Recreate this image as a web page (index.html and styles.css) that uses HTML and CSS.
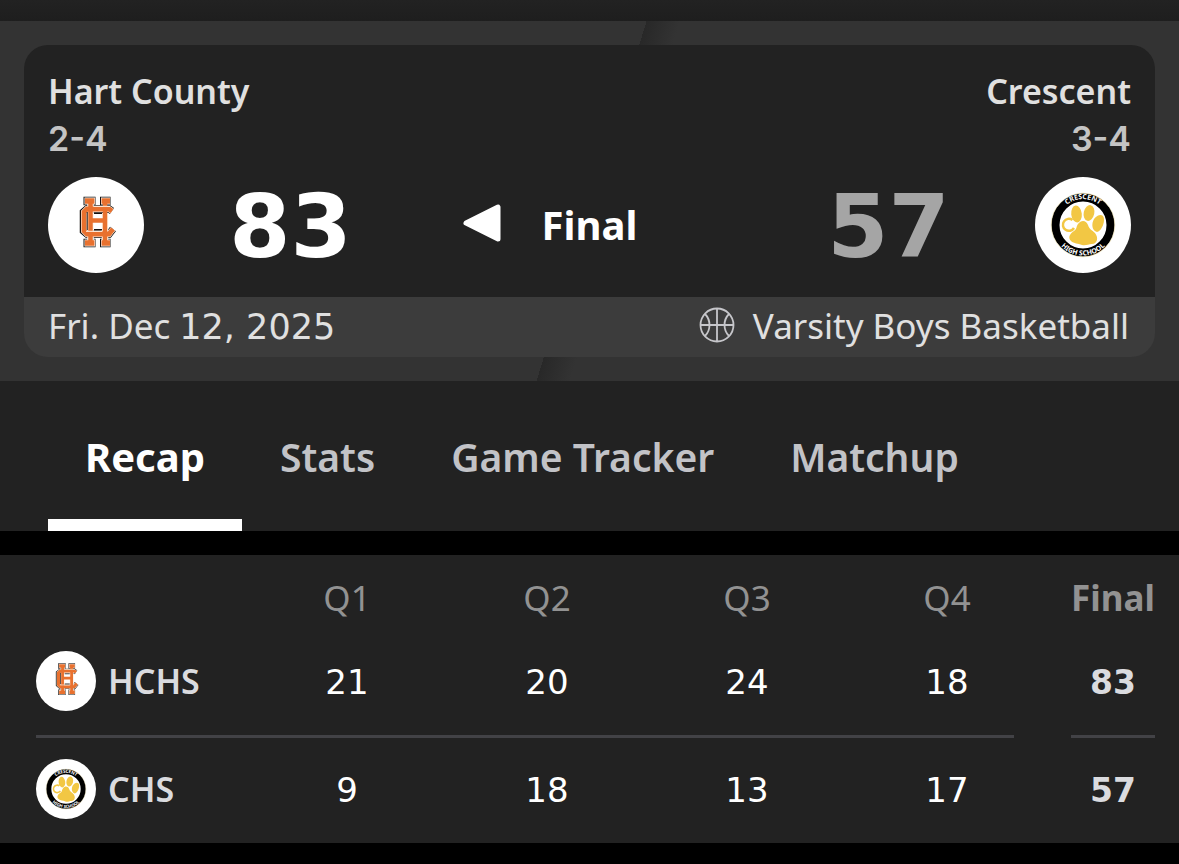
FILE: index.html
```html
<!DOCTYPE html>
<html lang="en">
<head>
  <meta charset="UTF-8">
  <title>Hart County vs Crescent</title>
  <meta name="viewport" content="width=device-width, initial-scale=1.0">
  <link rel="stylesheet" href="styles.css">
</head>
<body>
  <!-- Shared logos -->
  <svg class="sprite" aria-hidden="true">
    <defs>
      <symbol id="logo-hart" viewBox="0 0 96 96">
        <circle cx="48" cy="48" r="48" fill="#fff"/>
        <g fill="none">
          <!-- dark edge -->
          <path d="M35.500 24H47.500M52 24H62.500M35.500 66H47.500M52 66H62.500" stroke="#17120f" stroke-width="8.500"/>
          <path d="M64 34L61 32H39L35.500 35V54L39 57H61L65 52" stroke="#17120f" stroke-width="7.500"/>
          <!-- light edge -->
          <path d="M36.500 24H47M53 24H62M36.500 66H47M53 66H62" stroke="#fff" stroke-width="7"/>
          <path d="M64 34L61 32H39L36 35V54L39 57H61L65 52" stroke="#fff3e6" stroke-width="6"/>
          <path d="M42.500 24V66M57 36V66" stroke="#fff3e6" stroke-width="6.500"/>
          <!-- C and H -->
          <path d="M64 34L61 32H39L36 35V54L39 57H61L65 52" stroke="#e8712f" stroke-width="4.800"/>
          <path d="M39.200 35V53M46 36.500H54M46 52.500H54" stroke="#17120f" stroke-width="1"/>
          <path d="M37 24H46.500M53.500 24H62M37 66H46.500M53.500 66H62" stroke="#e8712f" stroke-width="5.500"/>
          <path d="M42.500 24V66M57 24V66M42 43.500H58" stroke="#e8712f" stroke-width="4.500"/>
          <path d="M45.500 29.300H62M38 54.300H54" stroke="#fff3e6" stroke-width="1"/>
        </g>
      </symbol>
      <symbol id="logo-crescent" viewBox="0 0 96 96">
        <circle cx="48" cy="48" r="48" fill="#fff"/>
        <circle cx="48" cy="48" r="27.500" fill="none" stroke="#000" stroke-width="8"/>
        <circle cx="48" cy="48" r="31.800" fill="none" stroke="#e8d99a" stroke-width="0.500"/>
        <g fill="#f2c744">
          <ellipse cx="41.500" cy="37" rx="5.300" ry="8.500" transform="rotate(-6 41.500 37)"/>
          <ellipse cx="54" cy="36" rx="5.300" ry="8" transform="rotate(12 54 36)"/>
          <path d="M68 39C71 43 67 54 62 55C57 54 56 47 59 42C62 38 66 37 68 39Z"/>
          <path d="M43 47C46 43 51 43 53 48C54 52 57 53 60 56C64 61 62 67 57 67C53 67 51 69 47 68C43 66 39 67 36 64C32 60 36 56 39 54C42 52 41 50 43 47Z"/>
        </g>
        <path d="M37.500 43A6 6 0 1 0 39 51" fill="none" stroke="#f2c744" stroke-width="2.500"/>
        <path id="arc-top" d="M22 48A26 26 0 0 1 74 48" fill="none"/>
        <path id="arc-bottom" d="M17.500 48A30.500 30.500 0 0 0 78.500 48" fill="none"/>
        <text class="logo-text"><textPath href="#arc-top" startOffset="50%">CRESCENT</textPath></text>
        <text class="logo-text"><textPath href="#arc-bottom" startOffset="50%">HIGH SCHOOL</textPath></text>
      </symbol>
    </defs>
  </svg>

  <div class="topbar"></div>

  <header class="hero">
    <div class="card">
      <div class="card-main">
        <div class="teams">
          <div class="team">
            <div class="team-name">Hart County</div>
            <div class="team-record">2-4</div>
          </div>
          <div class="team team-away">
            <div class="team-name">Crescent</div>
            <div class="team-record">3-4</div>
          </div>
        </div>
        <div class="score-row">
          <svg class="logo" role="img" aria-label="Hart County"><use href="#logo-hart"/></svg>
          <div class="score">83</div>
          <div class="status">
            <svg class="winner" viewBox="0 0 38 38" aria-hidden="true">
              <path d="M3 17L35 1V33Z" fill="#fff" stroke="#fff" stroke-width="5" stroke-linejoin="round"/>
            </svg>
            <span>Final</span>
          </div>
          <div class="score score-loser">57</div>
          <svg class="logo" role="img" aria-label="Crescent"><use href="#logo-crescent"/></svg>
        </div>
      </div>
      <div class="card-footer">
        <span>Fri. Dec <span class="num">12, 2025</span></span>
        <span class="sport">
          <svg class="ball" viewBox="0 0 36 36" aria-hidden="true">
            <g fill="none" stroke="#c6c6ca" stroke-width="1.800">
              <circle cx="18" cy="17" r="16.500"/>
              <path d="M18 0.500V33.500M1.500 17H34.500M6 6C12 12 12 22 6 28M30 6C24 12 24 22 30 28"/>
            </g>
          </svg>
          Varsity Boys Basketball
        </span>
      </div>
    </div>
  </header>

  <nav class="tabs">
    <a href="#recap" class="tab active">Recap</a>
    <a href="#stats" class="tab">Stats</a>
    <a href="#tracker" class="tab">Game Tracker</a>
    <a href="#matchup" class="tab">Matchup</a>
  </nav>

  <main class="box-score" id="recap">
    <table>
      <thead>
        <tr>
          <th class="col-team"></th>
          <th>Q1</th>
          <th>Q2</th>
          <th>Q3</th>
          <th>Q4</th>
          <th class="col-gap"></th>
          <th class="col-final">Final</th>
        </tr>
      </thead>
      <tbody>
        <tr>
          <td class="col-team">
            <div class="team-cell">
              <svg class="logo-small" role="img" aria-label="Hart County"><use href="#logo-hart"/></svg>
              HCHS
            </div>
          </td>
          <td class="num">21</td>
          <td class="num">20</td>
          <td class="num">24</td>
          <td class="num">18</td>
          <td class="col-gap"></td>
          <td class="col-final">83</td>
        </tr>
        <tr>
          <td class="col-team">
            <div class="team-cell">
              <svg class="logo-small" role="img" aria-label="Crescent"><use href="#logo-crescent"/></svg>
              CHS
            </div>
          </td>
          <td class="num">9</td>
          <td class="num">18</td>
          <td class="num">13</td>
          <td class="num">17</td>
          <td class="col-gap"></td>
          <td class="col-final">57</td>
        </tr>
      </tbody>
    </table>
  </main>
</body>
</html>
```
FILE: styles.css
```css
* {
  box-sizing: border-box;
}

body {
  margin: 0;
  background: #000;
  color: #fff;
  font-family: 'Noto Sans', 'Open Sans', sans-serif;
  font-size: 35px;
  line-height: 48px;
}

.sprite {
  position: absolute;
  width: 0;
  height: 0;
}

.logo-text {
  fill: #fff;
  font-size: 7px;
  font-weight: bold;
  text-anchor: middle;
}

/* Wide figures */
.num {
  font-family: 'DejaVu Sans', sans-serif;
}

.topbar {
  height: 21px;
  background: linear-gradient(#222, #1e1e1e);
}

/* Score header */
.hero {
  padding: 24px;
  background: linear-gradient(107deg, #333 calc(50% + 2px), #282828 calc(50% + 2px), #333 calc(50% + 34px));
}

.card {
  border-radius: 24px;
  overflow: hidden;
}

.card-main {
  padding: 22px 24px 24px;
  background: #222;
}

.teams {
  display: flex;
  justify-content: space-between;
  margin-bottom: 14px;
  font-size: 34px;
  font-weight: 600;
}

.team-away {
  text-align: right;
}

.team-name {
  color: #e0e0e0;
}

.team-record {
  color: #c4c4c4;
  font-family: Inter, sans-serif;
}

.score-row {
  display: flex;
  align-items: center;
}

.logo {
  flex: none;
  width: 96px;
  height: 96px;
}

.score {
  flex: 1;
  height: 96px;
  font-family: 'DejaVu Sans', sans-serif;
  font-size: 88px;
  font-weight: bold;
  line-height: 100px;
  text-align: center;
}

.score-loser {
  color: #a5a5a5;
}

.status {
  display: grid;
  grid-template-columns: 1fr auto 1fr;
  align-items: center;
  width: 305px;
  padding: 0 26px;
  font-size: 40px;
  font-weight: bold;
}

.winner {
  width: 38px;
  height: 38px;
  overflow: visible;
}

.card-footer {
  display: flex;
  justify-content: space-between;
  align-items: center;
  height: 60px;
  padding: 0 24px 2px;
  background: #3c3c3c;
  color: #e0e0e0;
}

.sport {
  display: flex;
  align-items: center;
  gap: 18px;
  padding-right: 2px;
}

.ball {
  width: 36px;
  height: 36px;
  overflow: visible;
}

/* Tabs */
.tabs {
  display: flex;
  height: 150px;
  padding: 0 48px;
  background: #222;
}

.tab {
  padding: 52px 38px 0;
  border-bottom: 12px solid transparent;
  color: #c2c3c7;
  font-size: 39px;
  font-weight: 600;
  text-decoration: none;
  white-space: nowrap;
}

.tab.active {
  padding: 52px 37px 0;
  border-color: #fff;
  color: #fff;
  font-size: 40px;
  font-weight: bold;
}

/* Quarter scores */
.box-score {
  margin-top: 24px;
  padding: 0 24px 3px 36px;
  background: #222;
}

table {
  width: 100%;
  table-layout: fixed;
  border-spacing: 0;
}

th,
td {
  padding: 0 0 0 66px;
  text-align: center;
}

th {
  height: 72px;
  padding-top: 14px;
  color: #929292;
  font-weight: normal;
}

td {
  height: 102px;
}

td.num {
  padding-top: 2px;
  font-size: 34px;
}

tbody tr:first-child td {
  height: 111px;
  border-bottom: 3px solid #424246;
}

.col-team {
  width: 178px;
  padding-left: 0;
}

.col-gap {
  width: 57px;
  padding-left: 0;
}

tbody tr:first-child .col-gap {
  border-bottom-color: transparent;
}

.col-final {
  width: 84px;
  padding-left: 0;
  font-weight: bold;
}

td.col-final {
  padding-top: 4px;
  color: #dadbdf;
  font-family: 'DejaVu Sans', sans-serif;
  font-size: 33px;
}

.team-cell {
  display: flex;
  align-items: center;
  gap: 12px;
  color: #dadbdf;
  font-size: 34px;
  font-weight: 600;
}

.logo-small {
  flex: none;
  width: 60px;
  height: 60px;
}
```
